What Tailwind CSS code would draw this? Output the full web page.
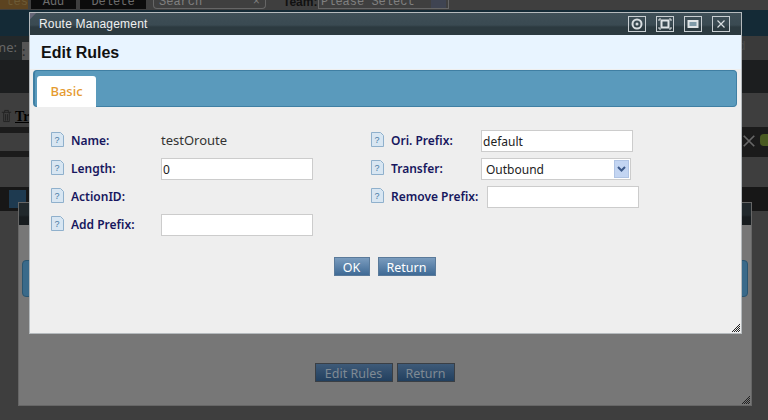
<!DOCTYPE html>
<html><head><script src="https://cdn.jsdelivr.net/npm/@tailwindcss/browser@4"></script></head>
<body class="m-0">
<div class="relative w-[768px] h-[420px] overflow-hidden bg-[#3e3e3e] font-['Noto_Sans',sans-serif]">
  <!-- dimmed page behind -->
  <div class="flex flex-col">
    <div class="h-[10px] flex items-start gap-[4px] overflow-hidden bg-[#3f3f3f] font-['Liberation_Mono',monospace] text-[12px] leading-[5px] text-[#6c6c6c]">
      <div class="w-[28px] h-[9px] bg-[#5c4320] text-[#6d5a35] text-right overflow-hidden">tes</div>
      <div class="-ml-[1px] w-[45px] h-[9px] bg-[#0c0c0c] text-center">Add</div>
      <div class="w-[66px] h-[9px] bg-[#0c0c0c] text-center">Delete</div>
      <div class="ml-[3px] w-[113px] h-[9px] border border-t-0 border-[#666] rounded-b-[4px] px-[5px] flex justify-between text-[#808080]"><span>Search</span><span>×</span></div>
      <div class="ml-[13px] font-bold text-[#111] w-[31px] font-['Liberation_Sans',sans-serif]">Team:</div>
      <div class="w-[131px] h-[9px] border border-t-0 border-[#666] px-[2px] text-[#808080] flex justify-between"><span>Please Select</span><span class="w-[15px] h-[8px] bg-[#3f4452]"></span></div>
    </div>
    <div class="h-[26px] bg-[#142a36]"></div>
    <div class="h-[24px] flex justify-between text-[13px]">
      <div class="flex-1 bg-[#23282a] flex items-center gap-[5px] text-[#666]"><span class="-ml-[6px]">me:</span><span class="w-[10px] h-[18px] bg-[#555] text-[#222] leading-[18px] mt-[6px]">:</span></div>
      <div class="w-[30px] bg-[#3a3a3a] text-[#4a4a4a] font-['Liberation_Mono',monospace] leading-[22px]">d Ti</div>
    </div>
    <div class="h-[33px] bg-[#1c1e1f]"></div>
    <div class="h-[34px] pt-[12px] flex items-center text-[14px] font-bold text-black font-['Liberation_Serif',serif] underline">
      <svg viewBox="0 0 14 14" class="w-[13px] h-[14px] mr-[2px]"><path d="M2 3h10M4 3v10h6V3M6 5v7M8 5v7M5 3V1h4v2" fill="none" stroke="#222" stroke-width="1"/></svg>Tra
    </div>
    <div class="h-[6px] bg-[#1b1b1b]"></div>
    <div class="h-[18px] flex justify-end"><div class="w-[30px] bg-[#1b1b1b]"></div></div>
    <div class="h-[6px] bg-[#1b1b1b]"></div>
    <div class="h-[30px]"></div>
    <div class="h-[24px] bg-[#171717] pl-[9px] pt-[3px]"><div class="w-[17px] h-[18px] bg-[#1e3a50]"></div></div>
  </div>
  <svg viewBox="0 0 16 16" class="absolute left-[742px] top-[134px] w-[14px] h-[14px]"><path d="M2 2l12 12M14 2L2 14" stroke="#666" stroke-width="2"/></svg>
  <div class="absolute left-[760px] top-[134px] w-[8px] h-[12px] rounded-l-[4px] bg-[#4a5a22]"></div>

  <!-- dimmed window behind -->
  <div class="absolute left-[18px] top-[202px] w-[734px] h-[204px] bg-[#777] border border-[#666] flex flex-col">
    <div class="h-[22px] bg-[linear-gradient(#20282c_0,#20282c_12px,#171c1f_14px)]"></div>
    <div class="mx-[3px] mt-[35px] h-[37px] bg-[#3a6a8a] border border-[#2a5570] rounded-[4px]"></div>
    <div class="flex justify-center gap-[4px] mt-[66px] pr-[1px]">
      <div class="w-[78px] h-[19px] bg-gradient-to-b from-[#3e5a78] to-[#22405f] border border-[#3a3f45] text-[12.5px] leading-[20px] text-center text-[#7f8a94]">Edit Rules</div>
      <div class="w-[58px] h-[19px] bg-gradient-to-b from-[#3e5a78] to-[#22405f] border border-[#3a3f45] text-[12.5px] leading-[20px] text-center text-[#7f8a94]">Return</div>
    </div>
    <svg viewBox="0 0 8 8" class="absolute right-[1px] bottom-[1px] w-[8px] h-[8px]"><path d="M0 8L8 0M2 8L8 2M4 8L8 4M6 8L8 6" stroke="#222" stroke-width="1"/></svg>
  </div>

  <!-- modal -->
  <div class="absolute left-[29px] top-[12px] w-[713px] h-[322px] border border-[#b5babd] bg-[#eeeeee] flex flex-col">
    <div class="h-[22px] bg-[linear-gradient(#3f4f57_0,#3a4a52_12px,#2c3a40_14px,#2c3a40_100%)] flex items-center justify-between pl-[9px] pr-[11px]">
      <span class="text-[12px] tracking-[0.2px] -mt-[1px] text-[#f0f0f0] font-['Liberation_Sans',sans-serif]">Route Management</span>
      <div class="flex gap-[10px]">
        <svg viewBox="0 0 18 16" class="w-[18px] h-[16px]"><rect x=".5" y=".5" width="17" height="15" fill="none" stroke="#c8ced2"/><circle cx="9" cy="8" r="4.5" fill="none" stroke="#d8dde0" stroke-width="2"/><circle cx="9" cy="8" r="1.5" fill="#d8dde0"/></svg>
        <svg viewBox="0 0 18 16" class="w-[18px] h-[16px]"><rect x=".5" y=".5" width="17" height="15" fill="none" stroke="#c8ced2"/><rect x="5.5" y="4.5" width="7" height="7" fill="none" stroke="#e0e4e6" stroke-width="2"/><path d="M3 5V3h2M13 3h2v2M15 11v2h-2M5 13H3v-2" fill="none" stroke="#e0e4e6"/></svg>
        <svg viewBox="0 0 18 16" class="w-[18px] h-[16px]"><rect x=".5" y=".5" width="17" height="15" fill="none" stroke="#c8ced2"/><rect x="4.5" y="5" width="9" height="6" fill="#7f9aa8" stroke="#e0e4e6" stroke-width="2"/></svg>
        <svg viewBox="0 0 18 16" class="w-[18px] h-[16px]"><rect x=".5" y=".5" width="17" height="15" fill="none" stroke="#c8ced2"/><path d="M5.5 4.5l7 7M12.5 4.5l-7 7" stroke="#d8dde0" stroke-width="1.2"/></svg>
      </div>
    </div>
    <div class="h-[34px] bg-[#e8f4ff] pl-[11px] pt-[2px] flex items-center text-[16px] font-bold text-[#111] font-['Liberation_Sans',sans-serif]">Edit Rules</div>
    <div class="ml-[3px] mr-[4px] mt-[1px] h-[37px] bg-[#5a9abc] border border-[#3f7fa3] border-l-[2px] rounded-[4px] pl-[2px] pt-[5px]">
      <div class="w-[59px] h-[31px] bg-white rounded-t-[3px] text-[13px] font-medium text-[#e59a2f] text-center leading-[30px]">Basic</div>
    </div>
    <div class="flex pl-[21px] pt-[23px]">
      <div class="w-[320px] flex flex-col gap-[6px]">
        <div class="h-[22px] flex items-center"><svg viewBox="0 0 13 15" class="w-[13px] h-[15px] mr-[7px] -mt-[3px]"><path d="M.5.5h9l3 3v11H.5z" fill="#d8e6f2" stroke="#8fb0cc"/><text x="6" y="11" font-size="9" fill="#4a7ba5" text-anchor="middle" font-family="Liberation Sans">?</text></svg><span class="w-[90px] -mt-[1px] text-[12px] font-semibold text-[#17175e]">Name:</span><span class="text-[13px] -mt-[1px] text-[#333]">testOroute</span></div>
        <div class="h-[22px] flex items-center"><svg viewBox="0 0 13 15" class="w-[13px] h-[15px] mr-[7px] -mt-[3px]"><path d="M.5.5h9l3 3v11H.5z" fill="#d8e6f2" stroke="#8fb0cc"/><text x="6" y="11" font-size="9" fill="#4a7ba5" text-anchor="middle" font-family="Liberation Sans">?</text></svg><span class="w-[90px] -mt-[1px] text-[12px] font-semibold text-[#17175e]">Length:</span><input value="0" class="w-[152px] h-[22px] bg-white border border-[#ccc] px-[1px] text-[12px] text-[#222]"></div>
        <div class="h-[22px] flex items-center"><svg viewBox="0 0 13 15" class="w-[13px] h-[15px] mr-[7px] -mt-[3px]"><path d="M.5.5h9l3 3v11H.5z" fill="#d8e6f2" stroke="#8fb0cc"/><text x="6" y="11" font-size="9" fill="#4a7ba5" text-anchor="middle" font-family="Liberation Sans">?</text></svg><span class="w-[90px] -mt-[1px] text-[12px] font-semibold text-[#17175e]">ActionID:</span></div>
        <div class="h-[22px] flex items-center"><svg viewBox="0 0 13 15" class="w-[13px] h-[15px] mr-[7px] -mt-[3px]"><path d="M.5.5h9l3 3v11H.5z" fill="#d8e6f2" stroke="#8fb0cc"/><text x="6" y="11" font-size="9" fill="#4a7ba5" text-anchor="middle" font-family="Liberation Sans">?</text></svg><span class="w-[90px] -mt-[1px] text-[12px] font-semibold text-[#17175e]">Add Prefix:</span><input class="w-[152px] h-[22px] bg-white border border-[#ccc]"></div>
      </div>
      <div class="flex flex-col gap-[6px]">
        <div class="h-[22px] flex items-center"><svg viewBox="0 0 13 15" class="w-[13px] h-[15px] mr-[7px] -mt-[3px]"><path d="M.5.5h9l3 3v11H.5z" fill="#d8e6f2" stroke="#8fb0cc"/><text x="6" y="11" font-size="9" fill="#4a7ba5" text-anchor="middle" font-family="Liberation Sans">?</text></svg><span class="w-[90px] -mt-[1px] text-[12px] font-semibold text-[#17175e]">Ori. Prefix:</span><input value="default" class="w-[152px] h-[22px] bg-white border border-[#ccc] px-[1px] text-[12px] text-[#222]"></div>
        <div class="h-[22px] flex items-center"><svg viewBox="0 0 13 15" class="w-[13px] h-[15px] mr-[7px] -mt-[3px]"><path d="M.5.5h9l3 3v11H.5z" fill="#d8e6f2" stroke="#8fb0cc"/><text x="6" y="11" font-size="9" fill="#4a7ba5" text-anchor="middle" font-family="Liberation Sans">?</text></svg><span class="w-[90px] -mt-[1px] text-[12px] font-semibold text-[#17175e]">Transfer:</span><div class="w-[150px] h-[22px] bg-white border border-[#ccc] pl-[4px] pr-[1px] py-[1px] flex items-center justify-between text-[12px] text-[#222]"><span class="mt-[1px]">Outbound</span><div class="w-[15px] h-[18px] bg-[#c3d5f2] border border-[#b0c4e4] flex items-center justify-center"><svg viewBox="0 0 9 6" class="w-[9px] h-[6px]"><path d="M1 1l3.5 3.5L8 1" fill="none" stroke="#3d5a8a" stroke-width="2"/></svg></div></div></div>
        <div class="h-[22px] flex items-center"><svg viewBox="0 0 13 15" class="w-[13px] h-[15px] mr-[7px] -mt-[3px]"><path d="M.5.5h9l3 3v11H.5z" fill="#d8e6f2" stroke="#8fb0cc"/><text x="6" y="11" font-size="9" fill="#4a7ba5" text-anchor="middle" font-family="Liberation Sans">?</text></svg><span class="w-[96px] -mt-[1px] text-[12px] font-semibold text-[#17175e] whitespace-nowrap">Remove Prefix:</span><input class="w-[152px] h-[22px] bg-white border border-[#ccc]"></div>
      </div>
    </div>
    <div class="flex justify-center gap-[8px] mt-[21px] pr-[2px]">
      <div class="w-[36px] h-[19px] bg-gradient-to-b from-[#7a9cbe] to-[#3f6a95] border border-[#5a7a9a] text-[12.5px] leading-[20px] text-center text-white">OK</div>
      <div class="w-[58px] h-[19px] bg-gradient-to-b from-[#7a9cbe] to-[#3f6a95] border border-[#5a7a9a] text-[12.5px] leading-[20px] text-center text-white">Return</div>
    </div>
    <svg viewBox="0 0 8 8" class="absolute left-0 top-0 w-[7px] h-[7px]"><path d="M0 0h7L0 7z" fill="#667"/></svg>
    <svg viewBox="0 0 8 8" class="absolute right-[1px] bottom-[1px] w-[8px] h-[8px]"><path d="M0 8L8 0M2 8L8 2M4 8L8 4M6 8L8 6" stroke="#222" stroke-width="1"/></svg>
  </div>
</div>
</body></html>
